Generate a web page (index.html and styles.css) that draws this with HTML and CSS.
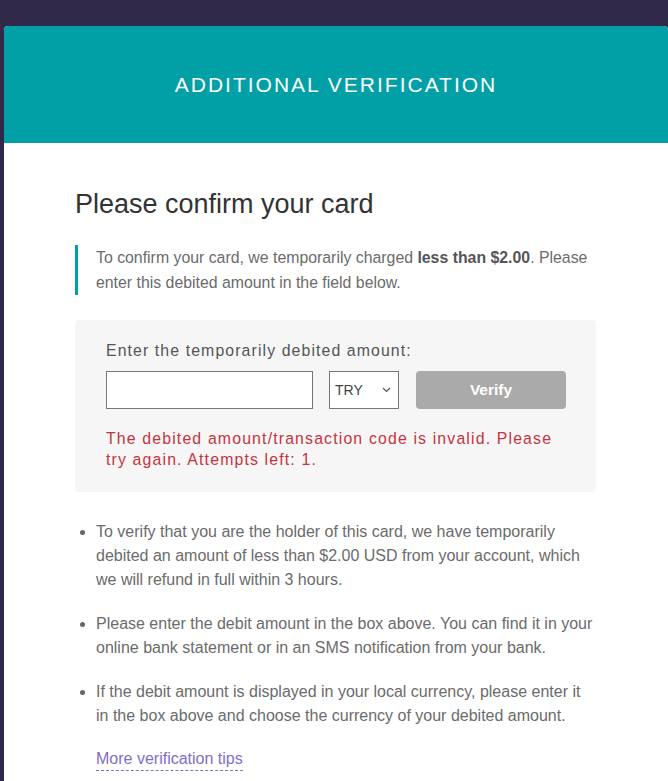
FILE: index.html
```html
<!DOCTYPE html>
<html>
<head>
<meta charset="utf-8">
<link rel="stylesheet" href="styles.css">
</head>
<body>
<div class="page">
  <div class="card">
    <div class="card-header">ADDITIONAL VERIFICATION</div>
    <div class="card-body">
      <h2 class="title">Please confirm your card</h2>
      <p class="note">To confirm your card, we temporarily charged <strong>less than $2.00</strong>. Please enter this debited amount in the field below.</p>
      <div class="form-box">
        <label class="label">Enter the temporarily debited amount:</label>
        <div class="form-row">
          <input class="amount" type="text">
          <div class="currency">TRY<svg class="chev" width="9" height="6" viewBox="0 0 9 6"><path d="M1 1 L4.5 4.5 L8 1" fill="none" stroke="#555" stroke-width="1.2"/></svg></div>
          <button class="verify">Verify</button>
        </div>
        <p class="error">The debited amount/transaction code is invalid. Please try again. Attempts left: 1.</p>
      </div>
      <ul class="tips">
        <li>To verify that you are the holder of this card, we have temporarily debited an amount of less than $2.00 USD from your account, which we will refund in full within 3 hours.</li>
        <li>Please enter the debit amount in the box above. You can find it in your online bank statement or in an SMS notification from your bank.</li>
        <li>If the debit amount is displayed in your local currency, please enter it in the box above and choose the currency of your debited amount.</li>
      </ul>
      <a class="more" href="#">More verification tips</a>
    </div>
  </div>
</div>
</body>
</html>
```
FILE: styles.css
```css
html, body {
  margin: 0;
  padding: 0;
  background: #30294a;
  font-family: "Liberation Sans", Arial, sans-serif;
  height: 100%;
  overflow: hidden;
}
.page {
  padding: 26px 0 0 4px;
}
.card {
  background: #fff;
  border-radius: 4px 4px 0 0;
  min-height: 800px;
}
.card-header {
  background: #00a0a6;
  color: #fff;
  height: 117px;
  display: flex;
  align-items: center;
  justify-content: center;
  font-size: 21px;
  letter-spacing: 2px;
  border-radius: 4px 4px 0 0;
}
.card-body {
  padding: 44px 72px 0 71px;
}
.title {
  margin: 0;
  font-weight: normal;
  font-size: 27px;
  color: #333;
  line-height: 34px;
}
.note {
  margin: 24px 0 0;
  border-left: 3px solid #00a0a6;
  padding: 0 0 0 18px;
  font-size: 15.85px;
  line-height: 25px;
  color: #6b6b6b;
}
.note strong {
  color: #555;
}
.form-box {
  margin-top: 25px;
  background: #f6f6f6;
  border-radius: 4px;
  padding: 20px 30px 22px 31px;
}
.label {
  display: block;
  font-size: 15.85px;
  letter-spacing: 1.1px;
  color: #555;
  line-height: 22px;
}
.form-row {
  display: flex;
  margin-top: 9px;
  height: 38px;
}
.amount {
  box-sizing: border-box;
  width: 207px;
  height: 38px;
  border: 1px solid #767676;
  background: #fff;
  margin: 0;
  padding: 0 8px;
}
.currency {
  box-sizing: border-box;
  width: 70px;
  height: 38px;
  margin-left: 16px;
  border: 1px solid #767676;
  background: #fff;
  display: flex;
  align-items: center;
  justify-content: space-between;
  padding: 0 7px 0 5px;
  font-size: 14px;
  color: #444;
}
.verify {
  margin-left: 17px;
  flex: 1;
  height: 38px;
  border: 0;
  border-radius: 4px;
  background: #aaa;
  color: #fff;
  font-family: "Liberation Sans", Arial, sans-serif;
  font-weight: bold;
  font-size: 15.5px;
}
.error {
  margin: 19px 0 0;
  color: #c4343f;
  font-size: 15.85px;
  line-height: 21px;
  letter-spacing: 1.15px;
}
.tips {
  margin: 28px 0 0;
  padding: 0 0 0 21px;
  color: #6b6b6b;
  font-size: 16px;
  line-height: 24px;
}
.tips li {
  margin-bottom: 20px;
}
.tips li::marker {
  color: #666;
}
.more {
  display: inline-block;
  margin-left: 21px;
  color: #7f6fc7;
  font-size: 16px;
  line-height: 22px;
  text-decoration: none;
  border-bottom: 1px dashed #7f6fc7;
}
```
